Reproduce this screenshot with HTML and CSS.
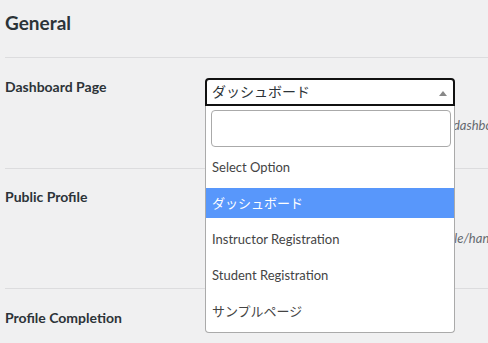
FILE: index.html
```html
<!DOCTYPE html>
<html lang="ja">
<head>
  <meta charset="UTF-8">
  <meta name="viewport" content="width=device-width, initial-scale=1.0">
  <title>Settings - General</title>
  <link rel="stylesheet" href="styles.css">
</head>
<body>
  <div class="wrap">
    <h2 class="section-title">General</h2>

    <div class="row row-dashboard">
      <div class="row-label">Dashboard Page</div>
      <div class="row-field">
        <div class="select2">
          <div class="select-box">
            <span class="select-value">ダッシュボード</span>
            <span class="select-arrow"></span>
          </div>
          <div class="dropdown">
            <input class="dropdown-search" type="text">
            <ul class="dropdown-options">
              <li>Select Option</li>
              <li class="is-active">ダッシュボード</li>
              <li>Instructor Registration</li>
              <li>Student Registration</li>
              <li>サンプルページ</li>
            </ul>
          </div>
        </div>
        <p class="desc">This page will be used as the default student's dashboard</p>
      </div>
    </div>

    <div class="row row-profile">
      <div class="row-label">Public Profile</div>
      <div class="row-field">
        <label class="toggle"><input type="checkbox"><span class="toggle-track"></span></label>
        <p class="desc">Profiles will all be visible at: example.com/profile/hanako</p>
      </div>
    </div>

    <div class="row">
      <div class="row-label">Profile Completion</div>
      <div class="row-field"></div>
    </div>
  </div>
</body>
</html>
```

FILE: styles.css
```css
* { box-sizing: border-box; margin: 0; padding: 0; }
html, body { height: 100%; }
body {
  font-family: 'Lato', 'Noto Sans CJK JP', sans-serif;
  background: #f0f0f1;
  color: #1d2327;
  overflow: hidden;
}
.wrap {
  width: 720px;
  padding-left: 5px;
}
.section-title {
  font-size: 19px;
  font-weight: 700;
  line-height: 24px;
  padding: 11px 0 22px;
  border-bottom: 1px solid #dcdcde;
  color: #2c3338;
}
.row {
  display: flex;
  padding: 20px 0;
  border-bottom: 1px solid #dcdcde;
}
.row-dashboard { height: 111px; }
.row-profile { height: 120px; padding-top: 19px; }
.row-label {
  width: 200px;
  flex-shrink: 0;
  font-size: 14px;
  font-weight: 700;
  line-height: 18px;
  color: #2c3338;
}
.row-field { flex: 1; }

/* select2 look */
.select2 {
  position: relative;
  width: 250px;
}
.select-box {
  display: flex;
  align-items: center;
  height: 28px;
  padding: 0 6px 0 5px;
  background: #fff;
  border: 2px solid #111;
  border-radius: 4px 4px 0 0;
}
.select-value {
  flex: 1;
  font-size: 14px;
  line-height: 24px;
  color: #2c3338;
}
.select-arrow {
  width: 0;
  height: 0;
  margin-top: 2px;
  border-style: solid;
  border-width: 0 4px 5px 4px;
  border-color: transparent transparent #888 transparent;
}
.dropdown {
  position: absolute;
  top: 28px;
  left: 0;
  width: 100%;
  z-index: 10;
  background: #fff;
  border: 1px solid #aaa;
  border-top: none;
  border-radius: 0 0 4px 4px;
}
.dropdown-search {
  display: block;
  width: 240px;
  height: 37px;
  margin: 4px 3px 0 5px;
  border: 1px solid #aaa;
  border-radius: 4px;
  background: #fff;
}
.dropdown-options {
  list-style: none;
  display: flex;
  flex-direction: column;
  gap: 6px;
  padding: 5px 0 6px;
}
.dropdown-options li {
  height: 30px;
  line-height: 30px;
  padding-left: 6px;
  font-size: 13px;
  color: #444;
}
.dropdown-options li.is-active {
  background: #5897fb;
  color: #fff;
}

.desc {
  margin-top: 10px;
  font-size: 13px;
  font-style: italic;
  line-height: 18px;
  color: #646970;
  white-space: nowrap;
}
.toggle {
  display: block;
  width: 40px;
  height: 22px;
}
.toggle input { display: none; }
.toggle-track {
  display: block;
  width: 40px;
  height: 22px;
  border-radius: 11px;
  background: #c3c4c7;
}
.row-profile .desc { margin-top: 19px; }
```
